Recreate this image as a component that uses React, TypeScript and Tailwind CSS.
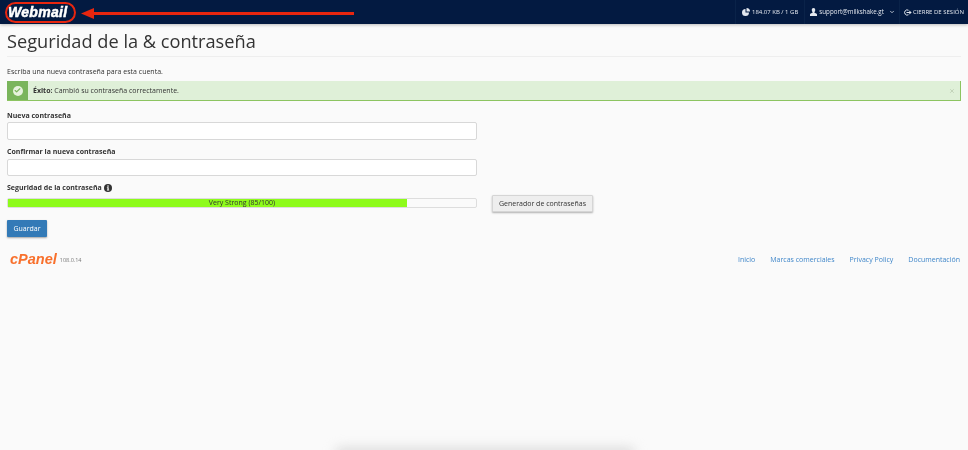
import React from 'react';
import { Check, ChevronDown, X } from 'lucide-react';

const FooterLink = ({ label }: { label: string }) => (
  <a className="text-[7px] leading-[10px] text-[#3f86c9]">{label}</a>
);

const PieIcon = () => (
  <svg width="8" height="8" viewBox="0 0 16 16" fill="currentColor">
    <path d="M7 2 A7 7 0 1 0 14 9 L7 9 Z" />
    <path d="M9 0 A7 7 0 0 1 16 7 L9 7 Z" />
  </svg>
);

const UserIcon = () => (
  <svg width="7" height="8" viewBox="0 0 14 16" fill="currentColor">
    <path d="M7 0 C9.4 0 10.5 1.8 10.5 4 C10.5 6 9.6 7.6 8.8 8.6 L8.8 9.6 C10.8 10.6 14 11 14 13 L14 16 L0 16 L0 13 C0 11 3.2 10.6 5.2 9.6 L5.2 8.6 C4.4 7.6 3.5 6 3.5 4 C3.5 1.8 4.6 0 7 0 Z" />
  </svg>
);

const SignOutIcon = () => (
  <svg width="8" height="7" viewBox="0 0 16 14" fill="none" stroke="currentColor" strokeWidth="2">
    <path d="M9 2.5 A5.2 5.2 0 1 0 9 11.5" />
    <path d="M5 7 L14 7" />
    <path d="M11 3.5 L15 7 L11 10.5 Z" fill="currentColor" strokeWidth="0.5" />
  </svg>
);

const InfoIcon = () => (
  <svg width="8" height="8" viewBox="0 0 16 16">
    <circle cx="8" cy="8" r="8" fill="#333333" />
    <rect x="6.6" y="2.8" width="2.8" height="2.6" fill="#fafafa" />
    <path d="M5.8 6.6 H9.4 V11.4 H10.4 V13 H5.8 V11.4 H6.8 V8.2 H5.8 Z" fill="#fafafa" />
  </svg>
);

export default function App() {
  return (
    <div className="relative h-[450px] w-[968px] overflow-hidden bg-[#fafafa] font-['Open_Sans',sans-serif] text-[#333] blur-[0.3px]">
      {/* top bar */}
      <div className="relative flex h-6 items-center justify-between bg-[#031a41] shadow-[0_1px_3px_rgba(0,0,0,0.25)]">
        <div className="ml-[8px] font-['Liberation_Sans',sans-serif] text-[14px] font-bold italic leading-none tracking-[0.3px] text-white [-webkit-text-stroke:0.5px_white]">
          Webmail
        </div>
        <div className="flex h-6 items-center text-[6px] text-[#e4e8ef]">
          <div className="flex h-6 items-center gap-[2px] border-l border-[#0a2349] px-[6px]">
            <PieIcon />
            <span>184.07 KB / 1 GB</span>
          </div>
          <div className="flex h-6 items-center gap-[2px] border-x border-[#0a2349] pl-[5px] pr-[4px]">
            <UserIcon />
            <span className="text-[6.2px]">support@milkshake.gt</span>
            <ChevronDown size={6} strokeWidth={3} className="ml-[3px]" />
          </div>
          <div className="flex h-6 items-center gap-[1px] pl-[4px] pr-[4px]">
            <SignOutIcon />
            <span>CIERRE DE SESIÓN</span>
          </div>
        </div>
      </div>

      {/* annotation */}
      <div className="absolute left-[5px] top-[2px] h-[21px] w-[71px] rounded-[11px] border-2 border-[#e8260f]" />
      <div className="absolute left-[92px] top-[12px] h-[2.5px] w-[262px] bg-[#e8260f]" />
      <svg className="absolute left-[81px] top-[8px]" width="13" height="11" viewBox="0 0 13 11">
        <path d="M0 5.5 L13 0 L13 11 Z" fill="#e8260f" />
      </svg>

      <div className="px-[7px]">
        <h1 className="h-[33px] border-b border-[#eeeeee] pt-[5px] text-[18.2px] font-normal leading-[24px] text-[#333]">
          Seguridad de la &amp; contraseña
        </h1>

        <p className="mt-[10px] text-[7px] leading-[10px] text-[#333]">Escriba una nueva contraseña para esta cuenta.</p>

        {/* alert */}
        <div className="mt-[4px] flex h-[20px] w-[954px] items-center border-b border-r border-[#8cc460] bg-[#dff0d8]">
          <div className="flex h-full w-[21px] items-center justify-center bg-[#7ab55c]">
            <div className="flex h-[10px] w-[10px] items-center justify-center rounded-full bg-[#e6f2dd]">
              <Check size={7} strokeWidth={4} className="text-[#7ab55c]" />
            </div>
          </div>
          <p className="ml-[5px] flex-1 text-[7px] leading-[10px] text-[#333]">
            <span className="font-bold">Éxito:</span> Cambió su contraseña correctamente.
          </p>
          <X size={6} strokeWidth={4} className="mr-[5px] text-[#c3d4ba]" />
        </div>

        {/* form */}
        <label className="mt-[10px] block text-[7px] font-bold leading-[10px]">Nueva contraseña</label>
        <div className="mt-[1px] h-[18px] w-[470px] rounded-[2px] border border-[#d8d8d8] bg-white" />

        <label className="mt-[7px] block text-[7px] font-bold leading-[10px]">Confirmar la nueva contraseña</label>
        <div className="mt-[2px] h-[17px] w-[470px] rounded-[2px] border border-[#d8d8d8] bg-white" />

        <label className="mt-[7px] flex items-center gap-[2px] text-[7px] font-bold leading-[10px]">
          Seguridad de la contraseña
          <InfoIcon />
        </label>

        <div className="mt-[2px] flex items-start">
          <div className="relative mt-[3px] h-[10px] w-[470px] rounded-[2px] border border-[#dddddd] bg-[#fafafa]">
            <div className="h-full w-[399px] bg-[#8efb1b]" />
            <div className="absolute inset-0 flex items-center justify-center text-[7px] text-[#333]">
              Very Strong (85/100)
            </div>
          </div>
          <button className="ml-[15px] h-[17px] w-[101px] rounded-[1px] border border-[#d5d5d5] bg-[#eeeeee] pt-[1px] text-[7px] text-[#333] shadow-[0_1px_2px_rgba(0,0,0,0.3)]">
            Generador de contraseñas
          </button>
        </div>

        <button className="mt-[8px] h-[17px] w-[40px] rounded-[1px] bg-[#337ab7] pt-[1px] text-[7px] text-white shadow-[0_1px_2px_rgba(0,0,0,0.35)]">
          Guardar
        </button>

        {/* footer */}
        <div className="mt-[15px] flex items-center justify-between pr-[1px]">
          <div className="flex items-center gap-[3px] pl-[3px]">
            <span className="font-['Liberation_Sans',sans-serif] text-[14.5px] font-bold italic leading-[14px] text-[#f8702c]">cPanel</span>
            <span className="mt-[2px] text-[5.5px] text-[#777]">108.0.14</span>
          </div>
          <div className="mt-[2px] flex gap-[15px]">
            <FooterLink label="Inicio" />
            <FooterLink label="Marcas comerciales" />
            <FooterLink label="Privacy Policy" />
            <FooterLink label="Documentación" />
          </div>
        </div>
      </div>

      {/* shadow at bottom edge */}
      <div className="absolute bottom-[-8px] left-[335px] h-[10px] w-[300px] rounded-full bg-[#d8d8d8] blur-[6px]" />
    </div>
  );
}
